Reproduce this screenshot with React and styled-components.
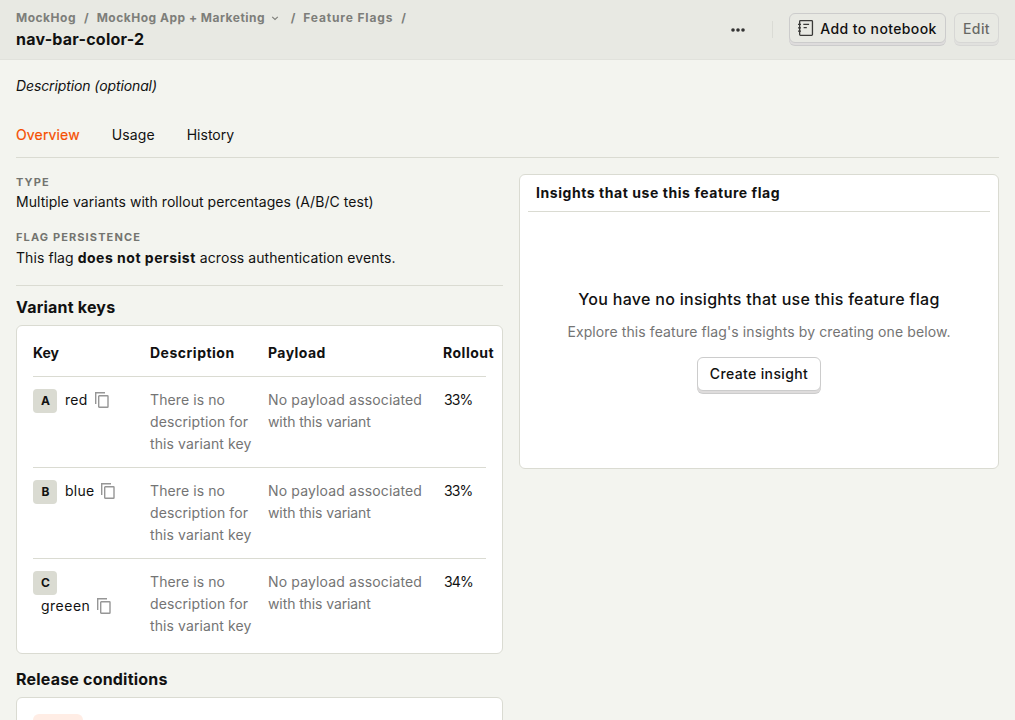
import React from "react";
import styled, { createGlobalStyle } from "styled-components";

const GlobalStyle = createGlobalStyle`
  *, *::before, *::after { box-sizing: border-box; }
  html, body { margin: 0; height: 100%; overflow: hidden; }
  body {
    background: #f3f4ef;
    color: #111;
    font-family: Inter, "Liberation Sans", sans-serif;
    font-size: 14px;
    font-weight: 400;
    line-height: 22px;
  }
`;

const Page = styled.div`
  height: 100vh;
  overflow: hidden;
`;

const Text = styled.span`
  letter-spacing: ${(p) => p.$track}px;
`;

const Bold = styled(Text)`
  font-weight: 700;
`;

const TopBar = styled.header`
  display: flex;
  justify-content: space-between;
  height: 60px;
  padding: 8px 16px 0;
  background: #e8e9e3;
  border-bottom: 1px solid #e1e2dc;
`;

const Breadcrumbs = styled.nav`
  display: flex;
  align-items: center;
  gap: 8px;
  height: 20px;
  font-size: 12px;
  font-weight: 700;
  line-height: 20px;
  color: #7d7e7a;
  white-space: nowrap;
`;

const Crumb = styled.span`
  display: flex;
  align-items: center;
  gap: 5px;
  letter-spacing: ${(p) => p.$track ?? 0.5}px;
  margin-right: ${(p) => p.$after || 0}px;
`;

const PageTitle = styled.h1`
  margin: 0;
  font-size: 16px;
  font-weight: 700;
  line-height: 22px;
  letter-spacing: 0.23px;
`;

const Actions = styled.div`
  display: flex;
  align-items: flex-start;
  padding-top: 5px;
`;

const MoreButton = styled.span`
  display: flex;
  margin: 9px 26px 0 0;
`;

const Separator = styled.span`
  width: 1px;
  height: 17px;
  margin: 8px 16px 0 0;
  background: #dadbd5;
`;

const Button = styled.button`
  display: flex;
  align-items: center;
  justify-content: center;
  gap: 6px;
  width: ${(p) => p.$width}px;
  height: ${(p) => (p.$large ? 34 : 30)}px;
  margin: 0 ${(p) => p.$right || 0}px 0 0;
  padding: 0;
  border: 1px solid #ccc;
  border-radius: 6px;
  background: ${(p) => (p.$large ? "#fff" : "#e8e9e3")};
  box-shadow: 0 2px 0 #dedcdc, 0 3px 0 #ccc;
  color: #111;
  font: 500 14px/20px Inter, "Liberation Sans", sans-serif;
  letter-spacing: 0.38px;
  opacity: ${(p) => (p.$disabled ? 0.6 : 1)};
  white-space: nowrap;
`;

const ButtonLabel = styled.span`
  padding-top: ${(p) => p.$drop ?? 2}px;
`;

const Content = styled.main`
  padding: 0 16px;
`;

const Description = styled.p`
  margin: 0;
  padding-top: 15px;
  font-style: italic;
  letter-spacing: -0.11px;
`;

const Tabs = styled.div`
  display: flex;
  gap: 32px;
  height: 44px;
  margin: 17px 0 16px;
  padding-top: 10px;
  border-bottom: 1px solid #dadbd2;
`;

const Tab = styled.span`
  color: ${(p) => (p.$active ? "#f54e00" : "#111")};
  -webkit-text-stroke: ${(p) => (p.$active ? "0.2px #f54e00" : "0")};
  letter-spacing: ${(p) => p.$track}px;
`;

const Columns = styled.div`
  display: grid;
  grid-template-columns: 487px 480px;
  gap: 16px;
  align-items: start;
`;

const Field = styled.div`
  height: ${(p) => p.$height}px;
`;

const FieldLabel = styled.div`
  font-size: 11px;
  font-weight: 700;
  line-height: 16px;
  letter-spacing: 1.12px;
  color: #737470;
  text-transform: uppercase;
  margin-bottom: ${(p) => p.$gap || 1}px;
`;

const SectionTitle = styled.h2`
  margin: 0;
  padding: ${(p) => p.$top}px 0 7px;
  font-size: 16px;
  font-weight: 700;
  line-height: 22px;
  letter-spacing: 0.2px;
`;

const Info = styled.section`
  border-bottom: 1px solid #dadbd2;
  height: 112px;
`;

const Card = styled.section`
  background: #fff;
  border: 1px solid #dadbd2;
  border-radius: 6px;
  padding: ${(p) => p.$padding ?? 16}px;
  height: ${(p) => p.$height}px;
`;

const VariantRow = styled.div`
  display: grid;
  grid-template-columns: 109px 110px 167px 43px;
  column-gap: 8px;
  padding: ${(p) => (p.$head ? 0 : 12)}px 0 12px;
  font-weight: ${(p) => (p.$head ? 700 : 400)};
  & + & { border-top: 1px solid #dadbd2; }
`;

const KeyCell = styled.div`
  display: flex;
  flex-direction: ${(p) => (p.$stacked ? "column" : "row")};
  align-items: flex-start;
`;

const Letter = styled.span`
  display: flex;
  align-items: center;
  justify-content: center;
  width: 24px;
  height: 24px;
  padding-left: 1px;
  border-radius: 4px;
  background: #dadbd2;
  font-size: 12px;
  font-weight: 700;
`;

const KeyName = styled.span`
  display: flex;
  align-items: center;
  gap: 6px;
  margin-left: 8px;
`;

const Muted = styled.div`
  color: #747474;
  letter-spacing: 0.1px;
`;

const PayloadText = styled(Muted)`
  width: 160px;
`;

const Rollout = styled.span`
  padding-left: 1px;
  letter-spacing: -0.9px;
`;

const ReleaseTag = styled.div`
  width: 50px;
  height: 28px;
  border-radius: 6px;
  background: #ffede5;
`;

const InsightTitle = styled.h3`
  margin: 0;
  height: 29px;
  padding-left: 8px;
  font-size: 14px;
  font-weight: 700;
  line-height: 20px;
  letter-spacing: 0.56px;
  border-bottom: 1px solid #dadbd2;
`;

const EmptyState = styled.div`
  display: flex;
  flex-direction: column;
  align-items: center;
  padding-top: 76px;
`;

const EmptyTitle = styled.h4`
  margin: 0 0 11px;
  font-size: 16px;
  font-weight: 500;
  line-height: 22px;
  letter-spacing: 0.29px;
`;

const EmptyText = styled(Muted)`
  margin-bottom: 14px;
`;

const CopyIcon = () => (
  <svg width="16" height="18" viewBox="0 0 16 18" fill="none" stroke="#969696" strokeWidth="1.4">
    <path d="M1.7 13V1.7H11" />
    <rect x="4.7" y="4.7" width="9.3" height="11.6" rx="0.6" />
  </svg>
);

const NotebookIcon = () => (
  <svg width="16" height="18" viewBox="0 0 16 18" fill="none" stroke="#3a3a38" strokeWidth="1.3">
    <rect x="1.65" y="1.65" width="12.8" height="14.7" rx="0.8" />
    <path d="M0 5.4h3M0 8.8h3M0 12.2h3M5.3 5.4h5.8M5.6 8.6h3.2" strokeWidth="1.2" />
  </svg>
);

const ChevronIcon = () => (
  <svg width="10" height="10" viewBox="0 0 10 10" fill="none" stroke="#7d7e7a" strokeWidth="1.1">
    <path d="M2.2 3.8L5 6.4L7.8 3.8" />
  </svg>
);

const MoreIcon = () => (
  <svg width="16" height="16" viewBox="0 0 16 16" fill="#333">
    <circle cx="3" cy="8" r="1.8" />
    <circle cx="8" cy="8" r="1.8" />
    <circle cx="13" cy="8" r="1.8" />
  </svg>
);

const variants = [
  { letter: "A", name: "red", rollout: "33%", track: 0.3 },
  { letter: "B", name: "blue", rollout: "33%", track: 0.25 },
  { letter: "C", name: "greeen", rollout: "34%", track: 0.5, stacked: true },
];

export default function App() {
  return (
    <Page>
      <GlobalStyle />
      <TopBar>
        <div>
          <Breadcrumbs>
            <Crumb>MockHog</Crumb>
            <span>/</span>
            <Crumb $after={2.5}>MockHog App + Marketing<ChevronIcon /></Crumb>
            <span>/</span>
            <Crumb $track={0.85}>Feature Flags</Crumb>
            <span>/</span>
          </Breadcrumbs>
          <PageTitle>nav-bar-color-2</PageTitle>
        </div>
        <Actions>
          <MoreButton><MoreIcon /></MoreButton>
          <Separator />
          <Button $width={157} $right={8}><NotebookIcon /><ButtonLabel>Add to notebook</ButtonLabel></Button>
          <Button $width={45} $disabled><ButtonLabel>Edit</ButtonLabel></Button>
        </Actions>
      </TopBar>
      <Content>
        <Description>Description (optional)</Description>
        <Tabs>
          <Tab $active $track={0.15}>Overview</Tab>
          <Tab $track={0.1}>Usage</Tab>
          <Tab $track={0}>History</Tab>
        </Tabs>
        <Columns>
          <div>
            <Info>
              <Field $height={55}>
                <FieldLabel>Type</FieldLabel>
                <Text $track={0.05}>Multiple variants with rollout percentages (A/B/C test)</Text>
              </Field>
              <Field $height={56}>
                <FieldLabel $gap={2}>Flag persistence</FieldLabel>
                <Text $track={0.07}>
                  This flag <Bold $track={0.5}>does not persist</Bold> across authentication events.
                </Text>
              </Field>
            </Info>
            <SectionTitle $top={10}>Variant keys</SectionTitle>
            <Card $height={329}>
              <VariantRow $head>
                <Text $track={0}>Key</Text>
                <Text $track={0.5}>Description</Text>
                <Text $track={0.45}>Payload</Text>
                <Text $track={0.5}>Rollout</Text>
              </VariantRow>
              {variants.map((v) => (
                <VariantRow key={v.letter}>
                  <KeyCell $stacked={v.stacked}>
                    <Letter>{v.letter}</Letter>
                    <KeyName><Text $track={v.track}>{v.name}</Text><CopyIcon /></KeyName>
                  </KeyCell>
                  <Muted>There is no description for this variant key</Muted>
                  <PayloadText><Text $track={0.15}>No payload associated</Text> <Text $track={-0.1}>with this variant</Text></PayloadText>
                  <Rollout>{v.rollout}</Rollout>
                </VariantRow>
              ))}
            </Card>
            <SectionTitle $top={14}>Release conditions</SectionTitle>
            <Card $height={120}>
              <ReleaseTag />
            </Card>
          </div>
          <Card $height={295} $padding={8}>
            <InsightTitle>Insights that use this feature flag</InsightTitle>
            <EmptyState>
              <EmptyTitle>You have no insights that use this feature flag</EmptyTitle>
              <EmptyText>Explore this feature flag's insights by creating one below.</EmptyText>
              <Button $large $width={124}><ButtonLabel $drop={0}>Create insight</ButtonLabel></Button>
            </EmptyState>
          </Card>
        </Columns>
      </Content>
    </Page>
  );
}
